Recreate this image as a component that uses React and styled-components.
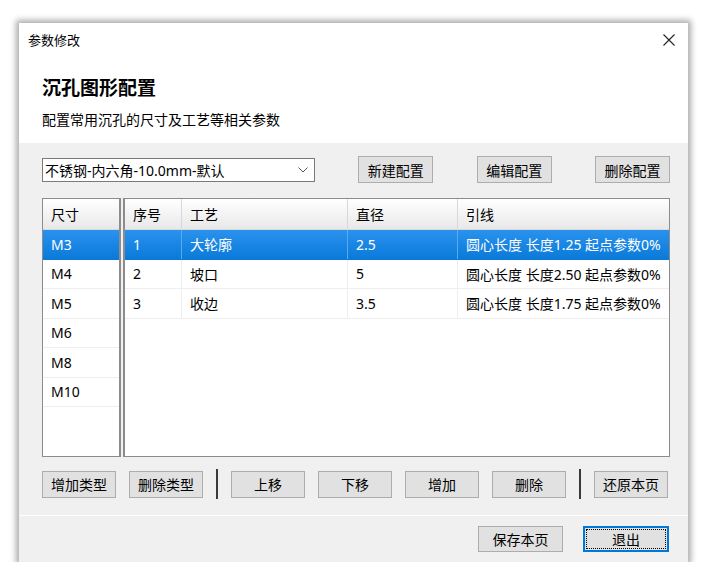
import React from 'react';
import styled, { createGlobalStyle, css } from 'styled-components';

const Global = createGlobalStyle`
  html, body {
    margin: 0;
    padding: 0;
    background: #ffffff;
  }
  body {
    font-family: 'Noto Sans', 'Noto Sans CJK SC', sans-serif;
    font-size: 14px;
    color: #000;
  }
`;

const Dialog = styled.div`
  margin: 23px 0 0 19px;
  width: 669px;
  height: 539px;
  display: flex;
  flex-direction: column;
  background: #f0f0f0;
  box-shadow: 0 0 6px 3px rgba(0, 0, 0, 0.33);
`;

const TitleBar = styled.div`
  height: 33px;
  flex: none;
  display: flex;
  align-items: center;
  justify-content: space-between;
  padding: 0 12px 0 9px;
  background: #fff;
  font-size: 13px;
`;

const CloseBtn = styled.div`
  width: 14px;
  height: 14px;
  display: flex;
  align-items: center;
  justify-content: center;
`;

const Header = styled.div`
  height: 87px;
  flex: none;
  box-sizing: border-box;
  padding: 20px 23px 0;
  background: #fff;
`;

const Heading = styled.div`
  font-size: 19px;
  font-weight: 700;
  line-height: 24px;
`;

const SubHeading = styled.div`
  margin-top: 11px;
  font-size: 14px;
  line-height: 18px;
`;

const Body = styled.div`
  height: 372px;
  flex: none;
  box-sizing: border-box;
  padding: 13px 18px 0 23px;
  display: flex;
  flex-direction: column;
`;

const Toolbar = styled.div`
  display: flex;
  align-items: center;
  justify-content: space-between;
  height: 27px;
`;

const Combo = styled.div`
  width: 273px;
  height: 24px;
  box-sizing: border-box;
  border: 1px solid #7a7a7a;
  background: #fff;
  display: flex;
  align-items: center;
  justify-content: space-between;
  padding: 0 6px 0 2px;
  font-size: 14px;
`;

const Button = styled.div`
  width: ${p => p.$w || 75}px;
  height: ${p => p.$h || 27}px;
  box-sizing: border-box;
  border: 1px solid #adadad;
  background: #e1e1e1;
  display: flex;
  align-items: center;
  justify-content: center;
  font-size: 14px;
  flex: none;
  ${p => p.$default && css`
    border: 2px solid #0078d7;
    outline: 1px dotted #000;
    outline-offset: -4px;
  `}
`;

const Panels = styled.div`
  margin-top: 15px;
  height: 259px;
  display: flex;
  gap: 2px;
`;

const SizeList = styled.div`
  width: 79px;
  box-sizing: border-box;
  border: 1px solid #8c8c8c;
  border-width: 1px 2px 1px 1px;
  background: #fff;
`;

const Table = styled.div`
  flex: 1;
  box-sizing: border-box;
  border: 1px solid #8c8c8c;
  border-left-width: 2px;
  background: #fff;
`;

const HeadRow = styled.div`
  display: grid;
  grid-template-columns: ${p => p.$cols};
  height: 31px;
  background: linear-gradient(#ffffff, #e8e8e8);
  border-bottom: 1px solid #d8d8d8;
  box-sizing: border-box;
`;

const HeadCell = styled.div`
  display: flex;
  align-items: center;
  padding-left: 8px;
  border-right: 1px solid #d8d8d8;
  &:last-child { border-right: none; }
`;

const Row = styled.div`
  display: grid;
  grid-template-columns: ${p => p.$cols};
  height: 29.5px;
  box-sizing: border-box;
  border-bottom: 1px solid #eeeeee;
  ${p => p.$selected && css`
    background: linear-gradient(#2a92ee, #0a7ad9);
    color: #fff;
    border-bottom-color: #0a7ad9;
  `}
`;

const Cell = styled.div`
  display: flex;
  align-items: center;
  padding-left: 8px;
  white-space: nowrap;
  overflow: hidden;
  border-right: 1px solid ${p => (p.$selected ? '#5aaaf0' : '#eeeeee')};
  &:last-child { border-right: none; }
`;

const ActionBar = styled.div`
  margin-top: 12px;
  height: 30px;
  display: flex;
  align-items: center;
  gap: 13px;
`;

const Separator = styled.div`
  width: 2px;
  height: 30px;
  background: #3a3a3a;
`;

const Footer = styled.div`
  flex: 1;
  border-top: 1px solid #ffffff;
  display: flex;
  align-items: center;
  justify-content: flex-end;
  gap: 20px;
  padding: 0 19px 0 0;
`;

const sizes = ['M3', 'M4', 'M5', 'M6', 'M8', 'M10'];
const rows = [
  ['1', '大轮廓', '2.5', '圆心长度 长度1.25 起点参数0%'],
  ['2', '坡口', '5', '圆心长度 长度2.50 起点参数0%'],
  ['3', '收边', '3.5', '圆心长度 长度1.75 起点参数0%'],
];
const cols = '57px 166px 110px 1fr';

export default function App() {
  return (
    <>
      <Global />
      <Dialog>
        <TitleBar>
          <span>参数修改</span>
          <CloseBtn>
            <svg width="12" height="12" viewBox="0 0 12 12">
              <path d="M0.5 0.5 L11.5 11.5 M11.5 0.5 L0.5 11.5" stroke="#222" strokeWidth="1.1" />
            </svg>
          </CloseBtn>
        </TitleBar>
        <Header>
          <Heading>沉孔图形配置</Heading>
          <SubHeading>配置常用沉孔的尺寸及工艺等相关参数</SubHeading>
        </Header>
        <Body>
          <Toolbar>
            <Combo>
              <span>不锈钢-内六角-10.0mm-默认</span>
              <svg width="10" height="6" viewBox="0 0 10 6">
                <path d="M0.5 0.5 L5 5 L9.5 0.5" fill="none" stroke="#555" strokeWidth="1" />
              </svg>
            </Combo>
            <Button>新建配置</Button>
            <Button>编辑配置</Button>
            <Button>删除配置</Button>
          </Toolbar>
          <Panels>
            <SizeList>
              <HeadRow $cols="1fr">
                <HeadCell>尺寸</HeadCell>
              </HeadRow>
              {sizes.map((s, i) => (
                <Row key={s} $cols="1fr" $selected={i === 0}>
                  <Cell $selected={i === 0}>{s}</Cell>
                </Row>
              ))}
            </SizeList>
            <Table>
              <HeadRow $cols={cols}>
                <HeadCell>序号</HeadCell>
                <HeadCell>工艺</HeadCell>
                <HeadCell>直径</HeadCell>
                <HeadCell>引线</HeadCell>
              </HeadRow>
              {rows.map((r, i) => (
                <Row key={r[0]} $cols={cols} $selected={i === 0}>
                  {r.map((c, j) => (
                    <Cell key={j} $selected={i === 0}>{c}</Cell>
                  ))}
                </Row>
              ))}
            </Table>
          </Panels>
          <ActionBar>
            <Button $w={74}>增加类型</Button>
            <Button $w={74}>删除类型</Button>
            <Separator />
            <Button $w={74}>上移</Button>
            <Button $w={74}>下移</Button>
            <Button $w={74}>增加</Button>
            <Button $w={74}>删除</Button>
            <Separator />
            <Button $w={74}>还原本页</Button>
          </ActionBar>
        </Body>
        <Footer>
          <Button $w={85} $h={26}>保存本页</Button>
          <Button $w={86} $h={26} $default>退出</Button>
        </Footer>
      </Dialog>
    </>
  );
}
